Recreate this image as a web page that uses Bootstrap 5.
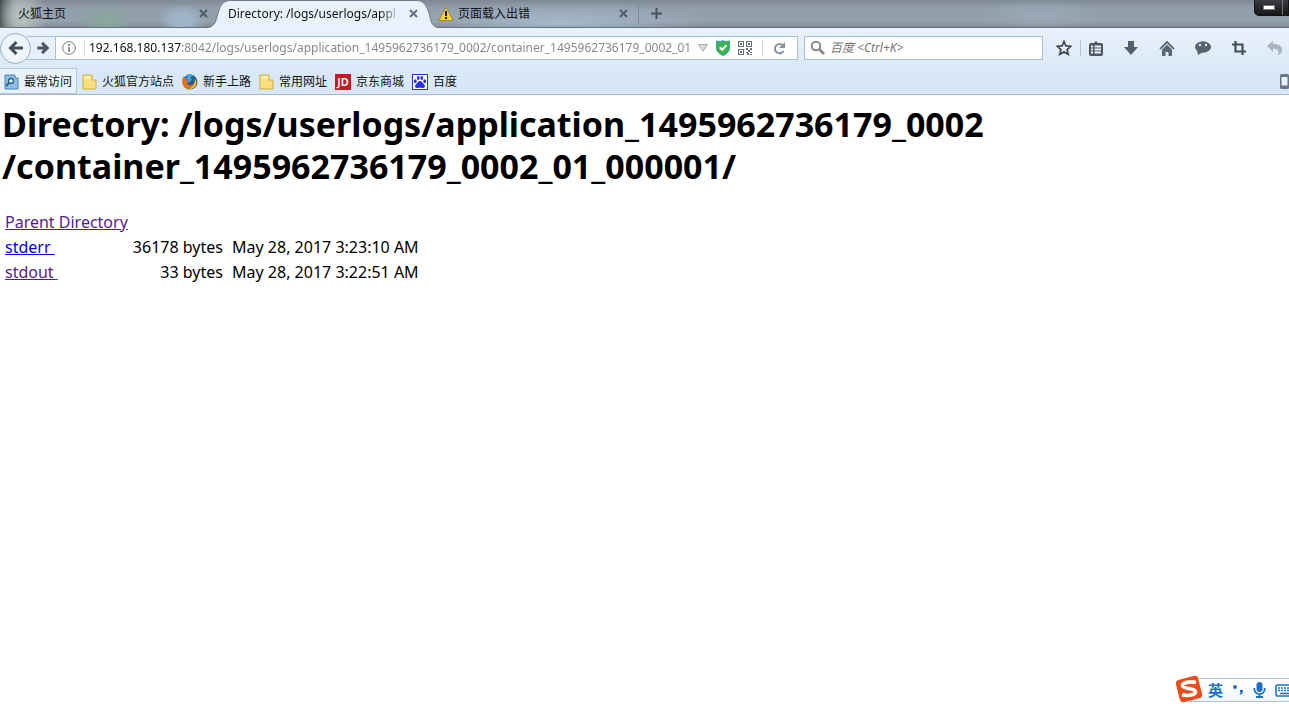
<!DOCTYPE html>
<html lang="zh-CN">
<head>
<meta charset="utf-8">
<meta name="viewport" content="width=device-width, initial-scale=1">
<title>Directory: /logs/userlogs/</title>
<link href="https://cdn.jsdelivr.net/npm/bootstrap@5.3.0/dist/css/bootstrap.min.css" rel="stylesheet">
<style>
body{font-family:"Noto Sans","Noto Sans CJK SC",sans-serif;font-size:16px;color:#000;background:#fff}
.ui{font-size:12px;line-height:18px;color:#111}
.ui svg,.ime svg{display:block;flex:none}
button{border:0;padding:0;background:none}
.tabstrip{height:28px;background:
 radial-gradient(ellipse 30px 16px at 107px 20px,#8ba69d 20%,transparent),
 radial-gradient(ellipse 24px 16px at 182px 20px,#9fb4c6 40%,transparent),
 radial-gradient(ellipse 26px 30px at 22px 16px,#b4bfba 20%,transparent),
 linear-gradient(90deg,#3f454b,transparent 16px),
 radial-gradient(ellipse 150px 20px at 560px 22px,#a5b7c9,transparent),
 radial-gradient(ellipse 60px 16px at 1040px 15px,#9aa9b7,transparent),
 linear-gradient(#7f8993,#919eab 30%,#93a1ae 80%,#7f8a95);border-bottom:1px solid #66727f}
.tab-first{width:208px;padding:0 0 0 18px}
.tab-live{width:230px;height:28px;padding:0 20px}
.tab-live>svg{position:absolute;left:0;top:0;width:100%;height:28px}
.tab-last{width:201px;padding:0 10px 0 0;border-right:1px solid #7d8995}
.tab-name{overflow:hidden;white-space:nowrap}
.tab-live .tab-name{-webkit-mask-image:linear-gradient(90deg,#000 88%,transparent)}
.winbtn{width:35px;height:16px;background:linear-gradient(#3b3d40,#151617);border:1px solid #111;border-top:0;border-radius:0 0 0 5px}
.winbtn span{width:12px;height:5px;background:#fff;border:1px solid #777788}
.winbtn i{position:absolute;right:5px;top:0;width:1px;height:15px;background:#777}
.chrome{background:linear-gradient(#e9f2fc,#d9e8f7 65%);border-bottom:1px solid #a0b8d3}
.navrow{height:40px}
.back{width:31px;height:31px;border:1px solid #98acc0;border-radius:50%;background:#edf4fc;z-index:2}
.fwd{width:29px;height:24px;margin-left:-4px;border:1px solid #a9bdd3;border-left:0;background:#e6effa}
.field{height:24px;border:1px solid #a9bdd3;background:#fff}
.field input{border:0;outline:0;padding:0;min-width:0;font-size:12px;line-height:18px;background:none}
.address-box{padding:0 11px 0 6px;margin-right:6px}
.address{color:transparent!important;background:linear-gradient(90deg,#111 93px,#838383 93px)!important;-webkit-background-clip:text!important;background-clip:text!important}
.searchbox{width:239px}
.searchbox input::placeholder{color:#777;font-style:italic;opacity:1}
.rule{width:1px;height:16px;background:#d7dbe0}
.spaced{margin:0 10px}
.tools{width:246px;padding:0 7px 0 13px}
.tools .rule{background:#b2c3d5}
.marks{height:26px}
.marks a{color:#111;text-decoration:none;white-space:nowrap;gap:5px;padding-top:1px}
.marks a:first-child{background:#e9f2fb;border:1px solid #b3c6da;height:26px;margin:0 -3px 0 -1px}
.listing{padding:8px 2px}
.listing h1{font-size:34px;line-height:42px;font-weight:700;margin:0 0 23px}
.listing td{padding:0 2px 0 3px;line-height:25px;white-space:nowrap}
.listing a{color:#551a8b;text-decoration:underline}
.listing a.fresh{color:#00e}
.ime{position:fixed;right:0;bottom:15px;width:114px;height:28px;color:#1f6fc2}
.ime-plate{height:24px;border:solid #afc3d6;border-width:1px 0;background:linear-gradient(#fff,#f2f6fa);margin:3px 0 0 14px;padding-left:19px;gap:9px;font-weight:700;font-size:15px}
</style>
</head>
<body>
<header class="ui">
 <div class="tabstrip d-flex align-items-center">
  <div class="tab-first d-flex align-items-center"><span class="tab-name flex-grow-1">火狐主页</span><button aria-label="关闭"><svg width="9" height="9" viewBox="0 0 9 9" stroke="#505c68" stroke-width="2"><path d="M1 1l7 7M8 1L1 8"/></svg></button></div>
  <div class="tab-live position-relative d-flex align-items-center">
   <svg viewBox="0 0 230 28" preserveAspectRatio="none"><path d="M0 28C8 26 8 20 11 10 13 4 16 .5 23 .5H208C216 .5 218 5 221 13 223 21 223 26 230 28Z" fill="#e9f2fc"/><path d="M0 27.500C8 26 8 20 11 10 13 4 16 .5 23 .5H208C216 .5 218 5 221 13 223 21 223 26 230 27.500" fill="none" stroke="#6f7d8b"/></svg>
   <span class="tab-name flex-grow-1 position-relative">Directory: /logs/userlogs/appl</span><button class="position-relative ms-2" aria-label="关闭"><svg width="9" height="9" viewBox="0 0 9 9" stroke="#66717d" stroke-width="2"><path d="M1 1l7 7M8 1L1 8"/></svg></button>
  </div>
  <div class="tab-last d-flex align-items-center"><svg width="16" height="16" viewBox="0 0 16 16"><path d="M8 1.2L15.2 14.5H.8Z" fill="#fbd31c" stroke="#9b8840" stroke-linejoin="round"/><path d="M8 5v5" stroke="#111" stroke-width="2"/><path d="M7 11h2v2H7z" fill="#111"/></svg><span class="tab-name flex-grow-1 ms-1">页面载入出错</span><button aria-label="关闭"><svg width="9" height="9" viewBox="0 0 9 9" stroke="#505c68" stroke-width="2"><path d="M1 1l7 7M8 1L1 8"/></svg></button></div>
  <button class="ms-2 ps-1" aria-label="新标签页"><svg width="11" height="11" viewBox="0 0 11 11" stroke="#46525e" stroke-width="2"><path d="M5.500 0v11M0 5.500h11"/></svg></button>
  <button class="winbtn position-relative ms-auto align-self-start d-flex align-items-center" aria-label="最小化"><span class="ms-2"></span><i></i></button>
 </div>
 <div class="chrome">
  <div class="navrow d-flex align-items-center">
   <button class="back d-flex align-items-center justify-content-center" aria-label="后退"><svg width="16" height="14" viewBox="0 0 16 14" fill="none" stroke="#424e59" stroke-width="3"><path d="M8.500 1L2.500 7l6 6M3 7h12"/></svg></button>
   <button class="fwd d-flex align-items-center ps-2" aria-label="前进"><svg width="15" height="12" viewBox="0 0 16 14" fill="none" stroke="#4c5762" stroke-width="3.500"><path d="M7.500 1l6 6-6 6M13 7H2"/></svg></button>
   <div class="field address-box flex-grow-1 d-flex align-items-center border-start-0">
    <svg width="14" height="14" viewBox="0 0 14 14" fill="none" stroke="#777"><circle cx="7" cy="7" r="6.300"/><path d="M7 6v5M7 3v2" stroke-width="1.600"/></svg>
    <span class="rule ms-2 me-1"></span>
    <input class="address flex-grow-1" type="text" aria-label="地址" value="192.168.180.137:8042/logs/userlogs/application_1495962736179_0002/container_1495962736179_0002_01_000001/">
    <svg class="ms-2" width="10" height="8" viewBox="0 0 10 8"><path d="M.5.5h9L5 7.300Z" fill="#d5d9dd" stroke="#a9b0b6"/></svg>
    <svg class="ms-2" width="14" height="16" viewBox="0 0 14 16"><path d="M.5 1C4 1.500 5 1.500 7 .7 9 1.500 10 1.500 13.500 1V8c0 3.500-3 6-6.500 7.500C3.500 14 .5 11.500.5 8Z" fill="#3db44b" stroke="#2c9cc0"/><path d="M3.800 7.300L6.200 9.700l4.200-4.400" fill="none" stroke="#fff" stroke-width="2"/></svg>
    <svg class="ms-2" width="14" height="14" viewBox="0 0 14 14" fill="#66707a"><path fill-rule="evenodd" d="M0 0h6v6H0zM1 1v4h4V1zM8 0h6v6H8zM9 1v4h4V1zM0 8h6v6H0zM1 9v4h4V9z"/><path d="M2 2h2v2H2zM10 2h2v2h-2zM2 10h2v2H2zM8 7h2v2H8zM12 7h2v2h-2zM10 9h2v2h-2zM8 11h2v1H8zM9 12h2v2H9zM12 11h2v1h-2zM12 13h2v1h-2z"/></svg>
    <span class="rule spaced"></span>
    <button aria-label="重新载入"><svg width="13" height="13" viewBox="0 0 13 13"><path d="M10.500 9A4.600 4.600 0 1 1 9.500 3.200" fill="none" stroke="#8693a0" stroke-width="2"/><path d="M12 0v6H6Z" fill="#8693a0"/></svg></button>
   </div>
   <div class="field searchbox d-flex align-items-center ps-1">
    <svg width="17" height="16" viewBox="0 0 17 16" fill="none" stroke="#8a8a8a"><circle cx="7" cy="6" r="4.300" stroke-width="2"/><path d="M10 9l5 5" stroke-width="2.800"/></svg>
    <input class="flex-grow-1 ms-1" type="text" aria-label="搜索" placeholder="百度 &lt;Ctrl+K&gt;">
   </div>
   <div class="tools d-flex align-items-center">
    <button aria-label="收藏"><svg width="16" height="16" viewBox="0 0 16 16"><path d="M8 1.500l1.900 4.300 4.800.5-3.600 3.200 1.100 4.800L8 11.900l-4.200 2.400 1.100-4.800L1.300 6.300l4.800-.5Z" fill="#eef4fb" stroke="#424d59" stroke-width="1.800"/></svg></button>
    <span class="rule ms-2 me-2"></span>
    <button aria-label="书签"><svg width="14" height="15" viewBox="0 0 14 15"><rect x="0" y="2" width="14" height="13" rx="2" fill="#4c5865"/><path d="M4 3l3-3 3 3" fill="#4c5865"/><path d="M2 5.500h2M5.500 5.500H12M2 8.500h2M5.500 8.500H12M2 11.500h2M5.500 11.500H12" stroke="#eef4fb" stroke-width="1.800"/></svg></button>
    <button class="ms-auto" aria-label="下载"><svg width="14" height="15" viewBox="0 0 14 15"><path d="M4 0h6v6h4l-7 8-7-8h4Z" fill="#53606c"/></svg></button>
    <button class="ms-auto" aria-label="主页"><svg width="16" height="15" viewBox="0 0 16 15"><path d="M1 8l7-7 7 7" fill="none" stroke="#4c5865" stroke-width="1.700"/><path d="M3 8.500l5-5 5 5V15H9.500v-4h-3v4H3Z" fill="#5b6773"/></svg></button>
    <button class="ms-auto" aria-label="聊天"><svg width="16" height="15" viewBox="0 0 16 15"><ellipse cx="8" cy="6" rx="8" ry="5.700" fill="#56626e"/><path d="M2 9l1 5 5-3" fill="#56626e"/><circle cx="5" cy="4" r="1.200" fill="#dce8f4"/><circle cx="11" cy="4" r="1.200" fill="#dce8f4"/></svg></button>
    <button class="ms-auto" aria-label="截图"><svg width="14" height="14" viewBox="0 0 14 14" fill="none" stroke="#424e59" stroke-width="2.200"><path d="M3.500 0v10.500H14M0 3.500h10.500V14"/></svg></button>
    <button class="ms-auto" aria-label="撤销"><svg width="15" height="14" viewBox="0 0 15 14"><path d="M0 5l6-5v3c6 0 9 2 9 6 0 3-2 4.500-5 5 2-2 3-6-4-6v3Z" fill="#aab5c0"/></svg></button>
   </div>
  </div>
  <nav class="marks d-flex align-items-center gap-2">
   <a href="#" class="d-flex align-items-center px-1"><svg width="15" height="16" viewBox="0 0 15 16"><path d="M1 1h10v3h3v11H1Z" fill="#8fbfe0" stroke="#4b88b4"/><circle cx="7" cy="7" r="2.500" fill="#d9edf8" stroke="#2d6390" stroke-width="1.400"/><path d="M5 9l-3 3" stroke="#2d6390" stroke-width="2"/></svg>最常访问</a>
   <a href="#" class="d-flex align-items-center"><svg width="15" height="16" viewBox="0 0 15 16"><path d="M1 1h9v5h4v9H1Z" fill="#f6df7c" stroke="#d1ad42"/><path d="M2 2h7v3H2z" fill="#fff1ae"/></svg>火狐官方站点</a>
   <a href="#" class="d-flex align-items-center"><svg width="16" height="16" viewBox="0 0 16 16"><circle cx="8" cy="8" r="7.500" fill="#255c9b"/><path d="M4 1c2-1 6-1 8 1-3-.5-4 2-2 4L6 9Z" fill="#3fa6d8"/><path d="M1 2l1 2 3 0-1 2 3 1-2 2c1 3 6 3 8-1l0-3c3 3 2 10-5 10S-1 9 1 2Z" fill="#e6701c"/><path d="M13 5c3 4 0 10-6 10 4-2 6-5 6-10Z" fill="#f9c530"/></svg>新手上路</a>
   <a href="#" class="d-flex align-items-center"><svg width="15" height="16" viewBox="0 0 15 16"><path d="M1 1h9v5h4v9H1Z" fill="#f6df7c" stroke="#d1ad42"/><path d="M2 2h7v3H2z" fill="#fff1ae"/></svg>常用网址</a>
   <a href="#" class="d-flex align-items-center"><svg width="16" height="16" viewBox="0 0 16 16"><path d="M0 0h16v16H0z" fill="#c81623"/><text x="8" y="12" text-anchor="middle" font-family="Noto Sans" font-size="11" font-weight="600" fill="#fff">JD</text></svg>京东商城</a>
   <a href="#" class="d-flex align-items-center"><svg width="16" height="16" viewBox="0 0 16 16"><rect x=".5" y=".5" width="15" height="15" fill="#fff" stroke="#2932e1"/><g fill="#2932e1"><ellipse cx="3.300" cy="7.300" rx="1.400" ry="2"/><ellipse cx="6.200" cy="4" rx="1.400" ry="2"/><ellipse cx="9.800" cy="4" rx="1.400" ry="2"/><ellipse cx="12.700" cy="7.300" rx="1.400" ry="2"/><path d="M8 7c2 0 2.500 2 4 3.300 2 2 .5 4-1.500 3.700-1.500-.3-3.500-.3-5 0-2 .3-3.500-1.700-1.500-3.700C5.500 9 6 7 8 7Z"/></g></svg>百度</a>
   <button class="ms-auto" aria-label="手机"><svg width="9" height="15" viewBox="0 0 9 15"><rect x="0" y="0" width="9" height="15" rx="1.500" fill="#697580"/><path d="M1.500 3h6v8.500h-6z" fill="#e8f0f8"/></svg></button>
  </nav>
 </div>
</header>
<main class="listing">
 <h1>Directory: /logs/userlogs/application_1495962736179_0002<br>/container_1495962736179_0002_01_000001/</h1>
 <table>
  <tbody>
  <tr><td><a href="#">Parent Directory</a></td><td></td><td></td></tr>
  <tr><td><a href="#" class="fresh">stderr&nbsp;</a></td><td class="text-end">36178 bytes&nbsp;</td><td>May 28, 2017 3:23:10 AM</td></tr>
  <tr><td><a href="#">stdout&nbsp;</a></td><td class="text-end">33 bytes&nbsp;</td><td>May 28, 2017 3:22:51 AM</td></tr>
  </tbody>
 </table>
</main>
<aside class="ime">
 <div class="ime-plate d-flex align-items-center"><span>英</span><svg width="12" height="12" viewBox="0 0 12 12" fill="#1f6fc2"><circle cx="3" cy="3" r="2"/><path d="M8 6h3c0 3-1 4-3 5l-.5-1C9 9 9 9 8 8Z"/></svg><svg width="13" height="16" viewBox="0 0 13 16"><rect x="3.500" y="0" width="6" height="10" rx="3" fill="#1f6fc2"/><path d="M1.300 6v1a5 5 0 0 0 10.400 0V6M6.500 12v3M3 15h7" fill="none" stroke="#1f6fc2" stroke-width="1.800"/></svg><svg width="15" height="13" viewBox="0 0 15 13"><rect x="1" y="1" width="18" height="11" rx="1.500" fill="#fff" stroke="#1f6fc2" stroke-width="1.600"/><path d="M3 4h14M3 6.500h14" stroke="#1f6fc2" stroke-width="1.600" stroke-dasharray="2 1"/><path d="M5 9.500h9" stroke="#1f6fc2" stroke-width="1.600"/></svg></div>
 <svg class="position-absolute top-0 start-0" width="28" height="28" viewBox="0 0 28 28"><rect x="2.500" y="2.500" width="23" height="23" rx="4" fill="#ee4b1c" transform="rotate(-14 14 14)"/><path d="M21 7.500C15 6 7 7.500 7.500 11c.5 3 12.500 2 13 5.500C21 20 12 21.500 7 19.500" fill="none" stroke="#fff" stroke-width="3.600"/></svg>
</aside>
<script src="https://cdn.jsdelivr.net/npm/bootstrap@5.3.0/dist/js/bootstrap.bundle.min.js"></script>
</body>
</html>
